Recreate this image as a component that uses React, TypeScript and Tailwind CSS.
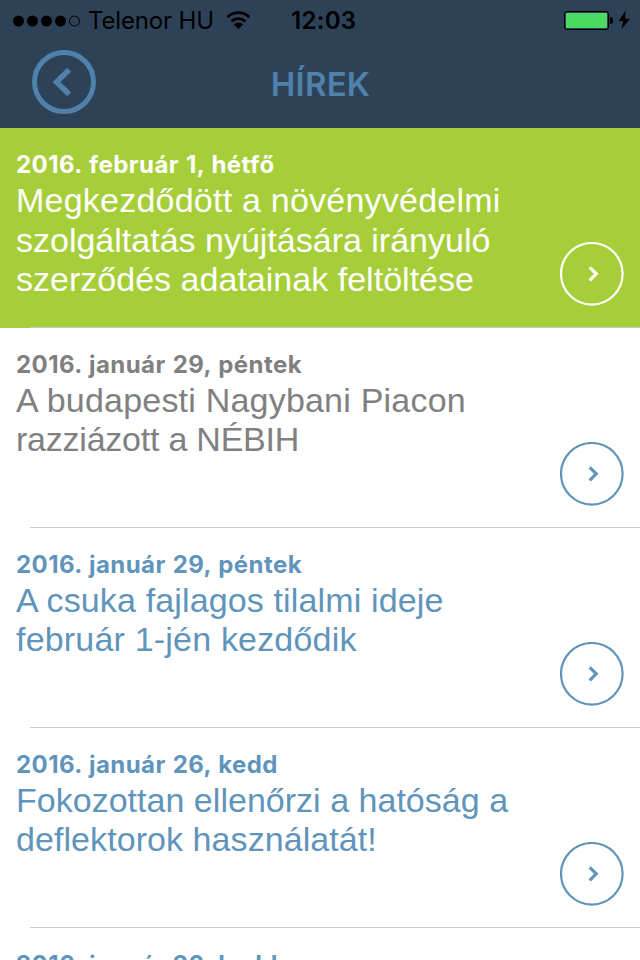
import clsx from "clsx"

type Line = {
  text: string
  tracking?: string
}

type NewsItem = {
  date: string
  lines: Line[]
  state?: "active" | "read"
}

const news: NewsItem[] = [
  {
    date: "2016. február 1, hétfő",
    lines: [
      { text: "Megkezdődött a növényvédelmi", tracking: "tracking-[0.23px]" },
      { text: "szolgáltatás nyújtására irányuló" },
      { text: "szerződés adatainak feltöltése", tracking: "tracking-[0.02px]" },
    ],
    state: "active",
  },
  {
    date: "2016. január 29, péntek",
    lines: [
      { text: "A budapesti Nagybani Piacon", tracking: "tracking-[0.21px]" },
      { text: "razziázott a NÉBIH", tracking: "tracking-[-0.23px]" },
    ],
    state: "read",
  },
  {
    date: "2016. január 29, péntek",
    lines: [
      { text: "A csuka fajlagos tilalmi ideje", tracking: "tracking-[0.14px]" },
      { text: "február 1-jén kezdődik", tracking: "tracking-[0.19px]" },
    ],
  },
  {
    date: "2016. január 26, kedd",
    lines: [
      { text: "Fokozottan ellenőrzi a hatóság a", tracking: "tracking-[0.02px]" },
      { text: "deflektorok használatát!", tracking: "tracking-[0.07px]" },
    ],
  },
  {
    date: "2016. január 26, kedd",
    lines: [],
  },
]

function StatusBar() {
  return (
    <div className="flex h-10 items-center pl-[13px] pr-[9px] text-black">
      <svg className="mt-px" width="68" height="12" viewBox="0 0 68 12">
        {[5.5, 19.5, 33.5, 47.5].map((x) => (
          <circle key={x} cx={x} cy="6" r="5.5" fill="currentColor" />
        ))}
        <circle cx="61.5" cy="6" r="5" fill="none" stroke="currentColor" />
      </svg>
      <span className="ml-[7px] mt-px w-[127px] whitespace-nowrap text-2xl tracking-[-0.15px]">Telenor HU</span>
      <svg className="ml-[11px]" width="25" height="20" viewBox="0 0 25 20">
        <g fill="none" stroke="currentColor" strokeWidth="2.8">
          <path d="M1.5 7.2a15.2 15.2 0 0 1 21.8 0" />
          <path d="M5.6 11.5a9.7 9.7 0 0 1 13.6 0" />
        </g>
        <path d="M12.4 19l-4.7-4.6a6.5 6.5 0 0 1 9.4 0z" fill="currentColor" />
      </svg>
      <span className="ml-10 mt-px whitespace-nowrap text-2xl font-semibold tracking-[0.3px]">12:03</span>
      <svg className="ml-auto" width="68" height="20" viewBox="0 0 68 20">
        <rect x="1.5" y="1.5" width="44" height="18" rx="2.5" fill="none" stroke="currentColor" />
        <rect x="3" y="3" width="41" height="15" rx="1" fill="#4cd964" />
        <path d="M47 7c2 0 3 1 3 3.5s-1 3.500-3 3.500z" fill="currentColor" />
        <path d="M62.7 .5L55.7 11h4.5L58.3 19.3L67 8.7h-4.9z" fill="currentColor" />
      </svg>
    </div>
  )
}

function NavBar() {
  return (
    <div className="grid h-[88px] grid-cols-[96px_1fr_96px] items-center">
      <button className="-mt-1 ml-8 h-16 w-16" aria-label="Vissza">
        <svg width="64" height="64" viewBox="0 0 64 64" fill="none" stroke="currentColor">
          <circle cx="32" cy="32" r="29.5" strokeWidth="5" />
          <path d="M37.2 19.7L24.5 32l12.7 12.3" strokeWidth="5.5" />
        </svg>
      </button>
      <h1 className="pb-px pl-px text-center text-[33px] font-semibold leading-10 tracking-[0.2px]">HÍREK</h1>
    </div>
  )
}

function NewsRow({ item }: { item: NewsItem }) {
  const active = item.state === "active"
  return (
    <li className={clsx("flex h-[200px] shrink-0 flex-col", active ? "bg-[#a6ce39] text-white" : "bg-white text-[#5f94bb]")}>
      <div className="flex flex-1 items-end justify-between px-4">
        <div className={clsx("self-start whitespace-nowrap pt-[21px]", item.state === "read" && "text-[#808080]")}>
          <div className="h-8 text-2xl font-bold leading-8 tracking-[0.45px] [word-spacing:0.8px]">{item.date}</div>
          <div
            className={clsx(
              "font-['Liberation_Sans',Arial,sans-serif] text-[34px]",
              active ? "leading-[39.5px]" : "leading-[39px]"
            )}
          >
            {item.lines.map((line) => (
              <div key={line.text} className={line.tracking}>
                {line.text}
              </div>
            ))}
          </div>
        </div>
        <svg className="mb-[21px] shrink-0" width="64" height="64" viewBox="0 0 64 64" fill="none" stroke="currentColor">
          <circle cx="31.8" cy="31.8" r="30.8" strokeWidth="2.2" />
          <path d="M29.7 25.3l6.5 6.5l-6.5 6.5" strokeWidth="3.2" />
        </svg>
      </div>
      <div className="ml-[30px] h-px bg-[#c8c7cc]" />
    </li>
  )
}

export default function App() {
  return (
    <div className="flex h-[960px] w-[640px] flex-col overflow-hidden bg-white font-['Inter',sans-serif]">
      <header className="h-32 shrink-0 bg-[#2e4257] text-[#4f81aa]">
        <StatusBar />
        <NavBar />
      </header>
      <ul className="flex flex-col">
        {news.map((item, index) => (
          <NewsRow key={index} item={item} />
        ))}
      </ul>
    </div>
  )
}
